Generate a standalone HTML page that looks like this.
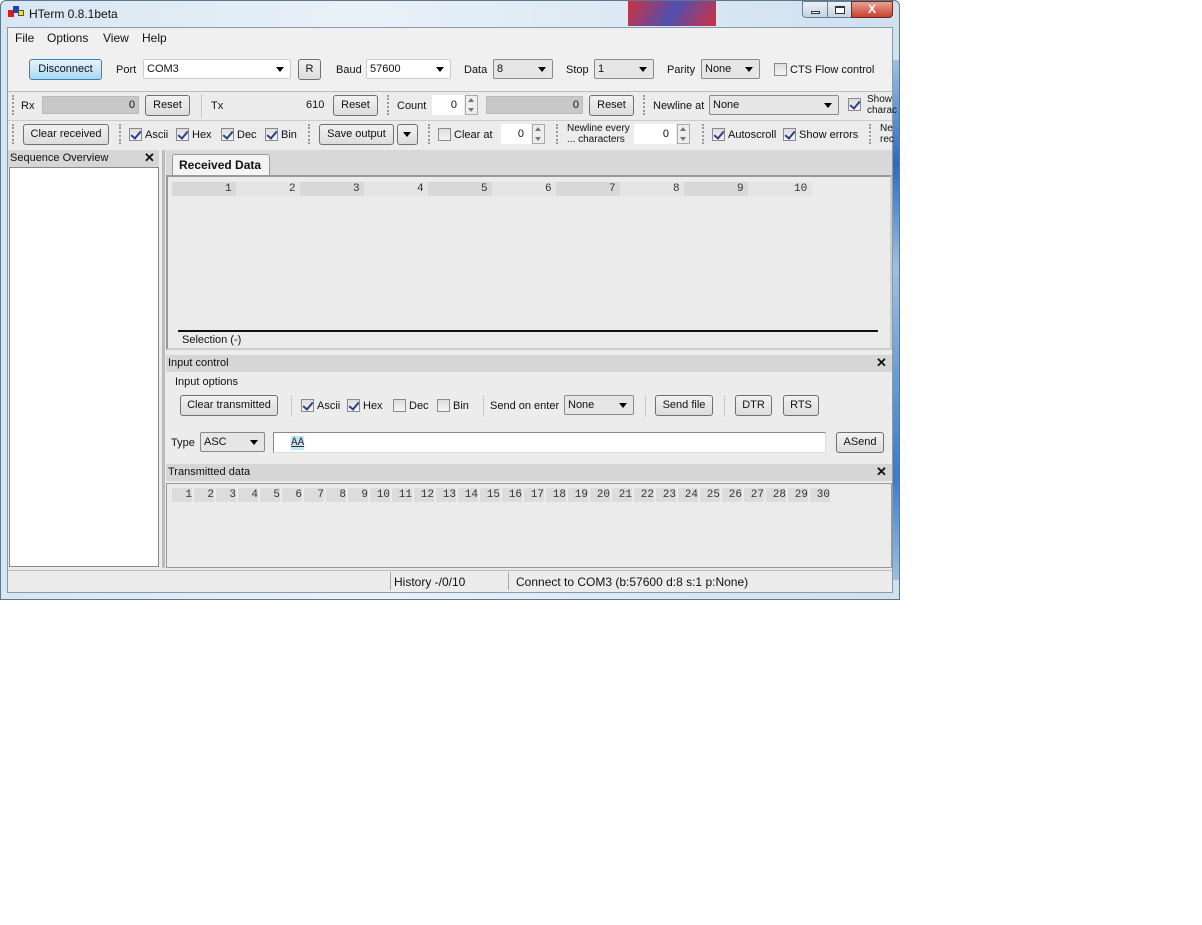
<!DOCTYPE html>
<html><head><meta charset="utf-8"><style>
*{box-sizing:border-box;margin:0;padding:0}
body{width:1202px;height:925px;background:#fff;position:relative;overflow:hidden;font-family:"Liberation Sans",sans-serif;font-size:11px;color:#111}
.a{position:absolute}
.t{position:absolute;white-space:nowrap;line-height:14px}
.btn{position:absolute;border:1px solid #707070;border-radius:3px;background:linear-gradient(#f2f2f2,#dcdcdc);text-align:center;line-height:18px;height:21px;white-space:nowrap}
.cb{position:absolute;width:13px;height:13px;border:1px solid #8a8a8a;background:linear-gradient(#ddd,#f6f6f6)}
.cb.c::after{content:"";position:absolute;left:3px;top:0px;width:4px;height:8px;border:solid #2a3f8f;border-width:0 2px 2px 0;transform:rotate(40deg)}
.combo{position:absolute;border:1px solid #8a8a8a;border-radius:2px;background:#e6e6e6;height:20px;line-height:18px;padding-left:3px}
.combo::after{content:"";position:absolute;right:6px;top:7px;border:4px solid transparent;border-top:5px solid #000;border-bottom:0}
.combo.w{background:#fff}
.edit{position:absolute;background:#fff;border:1px solid #ccc;height:20px;line-height:18px;text-align:right;padding-right:6px}
.spin{position:absolute;width:13px;height:20px;border:1px solid #aaa;background:#eee}
.spin::before{content:"";position:absolute;left:2px;top:2px;border:3px solid transparent;border-bottom:4px solid #777;border-top:0}
.spin::after{content:"";position:absolute;left:2px;top:12px;border:3px solid transparent;border-top:4px solid #777;border-bottom:0}
.grip{position:absolute;width:2px;border-left:2px dotted #999}
.sep{position:absolute;width:1px;background:#c8c8c8}
.bar{position:absolute;background:#c8c8c8;height:18px;line-height:16px;text-align:right;padding-right:3px;border:1px solid #bbb}
.hdr{position:absolute;background:#d6d6d6;height:17px;line-height:16px;padding-left:2px}
.x{position:absolute;font-weight:bold;font-size:13px}
.mono{font-family:"Liberation Mono",monospace;color:#333;font-size:11px}
.n{position:absolute;top:488px;width:20px;text-align:right;line-height:14px;background:#dcdcdc}
</style></head><body>
<div class="a" style="left:0;top:0;width:900px;height:600px;background:linear-gradient(90deg,#d8e6f2,#e9f1f8 40%,#cfe0ef);border:1px solid #5a7890;border-radius:6px 6px 0 0"></div>
<div class="a" style="left:628px;top:1px;width:88px;height:25px;background:linear-gradient(120deg,#d03040,#5050b0 50%,#d03040)"></div>
<div class="a" style="left:893px;top:60px;width:6px;height:520px;background:linear-gradient(#9cc0e4,#2a6cc0 20%,#9cc0e4 40%,#3a7cc8 80%,#9cc0e4)"></div>
<div class="a" style="left:8px;top:10px;width:6px;height:7px;background:#d02020"></div>
<div class="a" style="left:13px;top:6px;width:6px;height:7px;background:#2040c0"></div>
<div class="a" style="left:18px;top:10px;width:6px;height:6px;background:#f0e020;border:1px solid #555"></div>
<div class="t" style="left:29px;top:7px;font-size:12px">HTerm 0.8.1beta</div>
<div class="a" style="left:802px;top:1px;width:26px;height:17px;border:1px solid #6d7f94;border-radius:0 0 0 4px;background:linear-gradient(#eaf0f6,#c5d3e2)"><div class="a" style="left:8px;top:9px;width:9px;height:3px;border:1px solid #333;background:#fff"></div></div>
<div class="a" style="left:827px;top:1px;width:25px;height:17px;border:1px solid #6d7f94;background:linear-gradient(#eaf0f6,#c5d3e2)"><div class="a" style="left:7px;top:4px;width:10px;height:8px;border:1px solid #333;border-top-width:2px;background:#fff"></div></div>
<div class="a" style="left:851px;top:1px;width:42px;height:17px;border:1px solid #6d2b20;border-radius:0 0 4px 0;background:linear-gradient(#e8a090,#c84030);color:#fff;text-align:center;font-weight:bold;font-size:12px;line-height:15px">X</div>
<div class="a" style="left:7px;top:27px;width:886px;height:566px;background:#ececec;border:1px solid #8a9aa8"></div>
<div class="a" style="left:8px;top:28px;width:884px;height:19px;background:#f0f0f0"></div>
<div class="t" style="left:15px;top:31px;font-size:12px">File</div>
<div class="t" style="left:47px;top:31px;font-size:12px">Options</div>
<div class="t" style="left:103px;top:31px;font-size:12px">View</div>
<div class="t" style="left:142px;top:31px;font-size:12px">Help</div>
<div class="a" style="left:8px;top:47px;width:884px;height:45px;background:#f0f0f0;border-bottom:1px solid #bbb"></div>
<div class="btn" style="left:29px;top:59px;width:73px;background:linear-gradient(#e6f4fc,#a8d8f2);border-color:#3c7fb1">Disconnect</div>
<div class="t" style="left:116px;top:63px">Port</div>
<div class="combo w" style="left:143px;top:59px;width:148px;border-color:#ccc">COM3</div>
<div class="btn" style="left:298px;top:59px;width:23px">R</div>
<div class="t" style="left:336px;top:63px">Baud</div>
<div class="combo w" style="left:366px;top:59px;width:85px;border-color:#ccc">57600</div>
<div class="t" style="left:464px;top:63px">Data</div>
<div class="combo" style="left:493px;top:59px;width:60px">8</div>
<div class="t" style="left:566px;top:63px">Stop</div>
<div class="combo" style="left:594px;top:59px;width:60px">1</div>
<div class="t" style="left:667px;top:63px">Parity</div>
<div class="combo" style="left:701px;top:59px;width:59px">None</div>
<div class="cb" style="left:774px;top:63px"></div>
<div class="t" style="left:790px;top:63px">CTS Flow control</div>
<div class="grip" style="left:12px;top:95px;height:20px"></div>
<div class="t" style="left:21px;top:99px">Rx</div>
<div class="bar" style="left:42px;top:96px;width:97px">0</div>
<div class="btn" style="left:145px;top:95px;width:45px">Reset</div>
<div class="sep" style="left:201px;top:94px;height:24px"></div>
<div class="t" style="left:211px;top:99px">Tx</div>
<div class="t" style="left:306px;top:98px">610</div>
<div class="btn" style="left:333px;top:95px;width:45px">Reset</div>
<div class="grip" style="left:387px;top:95px;height:20px"></div>
<div class="t" style="left:397px;top:99px">Count</div>
<div class="edit" style="left:432px;top:95px;width:32px;border-color:#fff">0</div>
<div class="spin" style="left:465px;top:95px"></div>
<div class="bar" style="left:486px;top:96px;width:97px">0</div>
<div class="btn" style="left:589px;top:95px;width:45px">Reset</div>
<div class="grip" style="left:643px;top:95px;height:20px"></div>
<div class="t" style="left:653px;top:99px">Newline at</div>
<div class="combo" style="left:709px;top:95px;width:130px">None</div>
<div class="cb c" style="left:848px;top:98px"></div>
<div class="t" style="left:867px;top:94px;font-size:10px;line-height:11px">Show<br>charac</div>
<div class="a" style="left:8px;top:120px;width:884px;height:1px;background:#ccc"></div>
<div class="grip" style="left:12px;top:124px;height:20px"></div>
<div class="btn" style="left:23px;top:124px;width:86px">Clear received</div>
<div class="grip" style="left:119px;top:124px;height:20px"></div>
<div class="cb c" style="left:129px;top:128px"></div><div class="t" style="left:145px;top:128px">Ascii</div>
<div class="cb c" style="left:176px;top:128px"></div><div class="t" style="left:192px;top:128px">Hex</div>
<div class="cb c" style="left:221px;top:128px"></div><div class="t" style="left:237px;top:128px">Dec</div>
<div class="cb c" style="left:265px;top:128px"></div><div class="t" style="left:281px;top:128px">Bin</div>
<div class="grip" style="left:308px;top:124px;height:20px"></div>
<div class="btn" style="left:319px;top:124px;width:75px">Save output</div>
<div class="btn" style="left:397px;top:124px;width:21px"><span class="a" style="left:5px;top:7px;border:4px solid transparent;border-top:5px solid #000;border-bottom:0"></span></div>
<div class="grip" style="left:428px;top:124px;height:20px"></div>
<div class="cb" style="left:438px;top:128px"></div><div class="t" style="left:454px;top:128px">Clear at</div>
<div class="edit" style="left:501px;top:124px;width:30px;border-color:#fff">0</div>
<div class="spin" style="left:532px;top:124px"></div>
<div class="grip" style="left:556px;top:124px;height:20px"></div>
<div class="t" style="left:567px;top:123px;font-size:10px;line-height:11px">Newline every<br>... characters</div>
<div class="edit" style="left:634px;top:124px;width:42px;border-color:#fff">0</div>
<div class="spin" style="left:677px;top:124px"></div>
<div class="grip" style="left:702px;top:124px;height:20px"></div>
<div class="cb c" style="left:712px;top:128px"></div><div class="t" style="left:728px;top:128px">Autoscroll</div>
<div class="cb c" style="left:783px;top:128px"></div><div class="t" style="left:799px;top:128px">Show errors</div>
<div class="grip" style="left:869px;top:124px;height:20px"></div>
<div class="t" style="left:880px;top:123px;font-size:10px;line-height:11px">Ne<br>rec</div>
<div class="hdr" style="left:8px;top:150px;width:151px">Sequence Overview</div>
<div class="x" style="left:144px;top:150px">✕</div>
<div class="a" style="left:9px;top:167px;width:150px;height:400px;background:#fff;border:1px solid #888"></div>
<div class="a" style="left:162px;top:150px;width:3px;height:418px;background:#bbb"></div>
<div class="a" style="left:166px;top:150px;width:726px;height:25px;background:#d8d8d8"></div>
<div class="a" style="left:172px;top:154px;width:98px;height:22px;background:#f4f4f4;border:1px solid #999;border-bottom:none;border-radius:3px 3px 0 0;font-weight:bold;font-size:12px;padding:3px 0 0 6px">Received Data</div>
<div class="a" style="left:166px;top:175px;width:726px;height:175px;background:#ebebeb;border:2px solid #999;border-right-color:#ccc;border-bottom-color:#ccc"></div>
<div class="a" style="left:172px;top:182px;width:640px;height:14px;background:repeating-linear-gradient(90deg,#d8d8d8 0 64px,#e4e4e4 64px 128px)"></div>
<div class="t mono" style="left:225px;top:182px">1</div><div class="t mono" style="left:289px;top:182px">2</div><div class="t mono" style="left:353px;top:182px">3</div><div class="t mono" style="left:417px;top:182px">4</div><div class="t mono" style="left:481px;top:182px">5</div><div class="t mono" style="left:545px;top:182px">6</div><div class="t mono" style="left:609px;top:182px">7</div><div class="t mono" style="left:673px;top:182px">8</div><div class="t mono" style="left:737px;top:182px">9</div><div class="t mono" style="left:794px;top:182px">10</div>
<div class="a" style="left:178px;top:330px;width:700px;height:2px;background:#111"></div>
<div class="t" style="left:182px;top:333px">Selection (-)</div>
<div class="hdr" style="left:166px;top:355px;width:726px">Input control</div>
<div class="x" style="left:876px;top:355px">✕</div>
<div class="t" style="left:175px;top:375px">Input options</div>
<div class="btn" style="left:180px;top:395px;width:98px">Clear transmitted</div>
<div class="sep" style="left:291px;top:395px;height:22px"></div>
<div class="cb c" style="left:301px;top:399px"></div><div class="t" style="left:317px;top:399px">Ascii</div>
<div class="cb c" style="left:347px;top:399px"></div><div class="t" style="left:363px;top:399px">Hex</div>
<div class="cb" style="left:393px;top:399px"></div><div class="t" style="left:409px;top:399px">Dec</div>
<div class="cb" style="left:437px;top:399px"></div><div class="t" style="left:453px;top:399px">Bin</div>
<div class="sep" style="left:483px;top:395px;height:22px"></div>
<div class="t" style="left:490px;top:399px">Send on enter</div>
<div class="combo" style="left:564px;top:395px;width:70px">None</div>
<div class="sep" style="left:645px;top:395px;height:22px"></div>
<div class="btn" style="left:655px;top:395px;width:58px">Send file</div>
<div class="sep" style="left:724px;top:395px;height:22px"></div>
<div class="btn" style="left:735px;top:395px;width:37px">DTR</div>
<div class="btn" style="left:783px;top:395px;width:36px">RTS</div>
<div class="t" style="left:171px;top:436px">Type</div>
<div class="combo" style="left:200px;top:432px;width:65px">ASC</div>
<div class="a" style="left:273px;top:432px;width:553px;height:21px;background:#fff;border:1px solid #888;border-right-color:#ddd;border-bottom-color:#ddd"></div>
<div class="t mono" style="left:291px;top:436px;background:#bfe8f0;text-decoration:underline">AA</div>
<div class="btn" style="left:836px;top:432px;width:48px">ASend</div>
<div class="hdr" style="left:166px;top:464px;width:726px">Transmitted data</div>
<div class="x" style="left:876px;top:464px">✕</div>
<div class="a" style="left:166px;top:483px;width:726px;height:85px;background:#ebebeb;border:1px solid #999"></div>
<div class="mono">
<div class="n" style="left:172px">1</div><div class="n" style="left:194px">2</div><div class="n" style="left:216px">3</div><div class="n" style="left:238px">4</div><div class="n" style="left:260px">5</div><div class="n" style="left:282px">6</div><div class="n" style="left:304px">7</div><div class="n" style="left:326px">8</div><div class="n" style="left:348px">9</div><div class="n" style="left:370px">10</div><div class="n" style="left:392px">11</div><div class="n" style="left:414px">12</div><div class="n" style="left:436px">13</div><div class="n" style="left:458px">14</div><div class="n" style="left:480px">15</div><div class="n" style="left:502px">16</div><div class="n" style="left:524px">17</div><div class="n" style="left:546px">18</div><div class="n" style="left:568px">19</div><div class="n" style="left:590px">20</div><div class="n" style="left:612px">21</div><div class="n" style="left:634px">22</div><div class="n" style="left:656px">23</div><div class="n" style="left:678px">24</div><div class="n" style="left:700px">25</div><div class="n" style="left:722px">26</div><div class="n" style="left:744px">27</div><div class="n" style="left:766px">28</div><div class="n" style="left:788px">29</div><div class="n" style="left:810px">30</div>
</div>
<div class="a" style="left:8px;top:570px;width:884px;height:22px;background:#ececec;border-top:1px solid #bbb"></div>
<div class="sep" style="left:390px;top:572px;height:18px;background:#aaa"></div>
<div class="sep" style="left:508px;top:572px;height:18px;background:#aaa"></div>
<div class="t" style="left:394px;top:575px;font-size:12px">History -/0/10</div>
<div class="t" style="left:516px;top:575px;font-size:12px">Connect to COM3 (b:57600 d:8 s:1 p:None)</div>
</body></html>
